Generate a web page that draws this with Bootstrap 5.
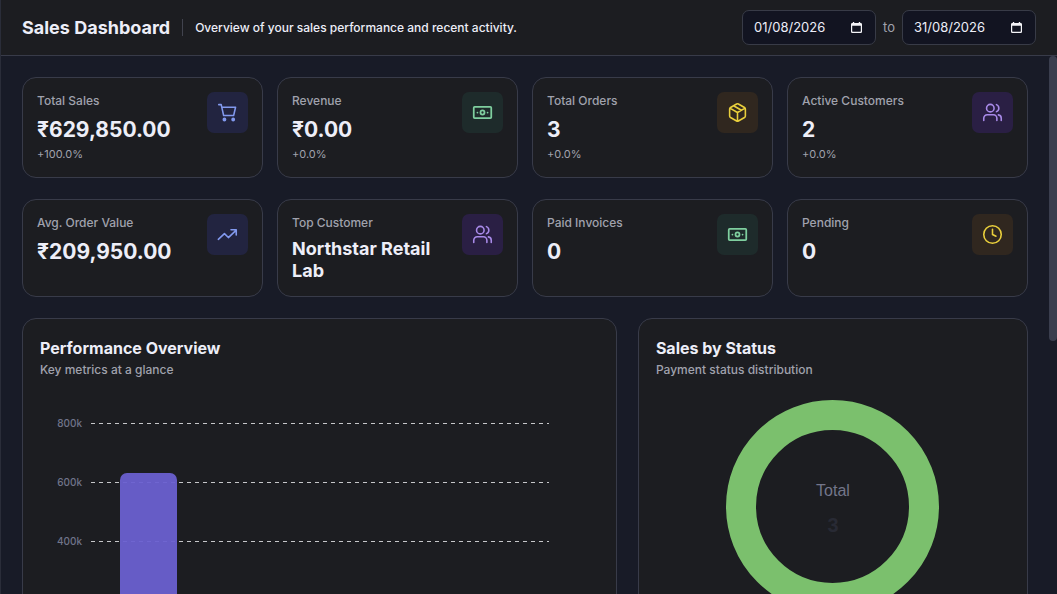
<!DOCTYPE html>
<html lang="en">
<head>
<meta charset="utf-8">
<meta name="viewport" content="width=device-width, initial-scale=1">
<title>Sales Dashboard</title>
<link href="https://cdn.jsdelivr.net/npm/bootstrap@5.3.0/dist/css/bootstrap.min.css" rel="stylesheet">
<style>
  :root { --line: #383b49; --panel: #1c1d21; --page: #181b27; --ink: #edeef8; --soft: #a0a2ad; }
  body { font-family: Inter, "Liberation Sans", sans-serif; background: var(--page); color: var(--ink); font-size: 12px; line-height: 17px; font-weight: 500; }
  .app { border-left: 1px solid #2a2d39; }
  .topbar { background: var(--panel); border-bottom: 1px solid var(--line); padding: 10px 21px; }
  .title-group { gap: 12px; }
  .page-title { font-size: 18px; line-height: 24px; font-weight: 700; }
  .divider { width: 1px; height: 17px; background: #41434e; }
  .soft { color: var(--soft); }
  .dates { gap: 7px; font-size: 13px; font-weight: 400; }
  .date-box { width: 134px; height: 35px; padding: 0 13px 0 11px; background: #121421; border: 1px solid #383b47; border-radius: 7px; }
  .date-box input { min-width: 0; padding: 0; border: 0; outline: 0; background: transparent; color: var(--ink); font-size: 13px; }
  .date-box button { padding: 0; border: 0; background: transparent; color: #f4f4f8; line-height: 0; }
  .scroller { overflow-y: auto; min-width: 0; scrollbar-width: none; }
  .scroller::-webkit-scrollbar { display: none; }
  .rail { width: 8px; }
  .thumb { height: 53%; background: #3a3e4e; border-radius: 4px; }
  .content { padding: 21px; gap: 21px; min-height: 1019px; }
  .stats { display: grid; grid-template-columns: repeat(4, minmax(0, 1fr)); gap: 21px 14px; }
  .tile { background: var(--panel); border: 1px solid var(--line); border-radius: 14px; padding: 14px; }
  .tile.tall { min-height: 101px; }
  .value { font-size: 21px; line-height: 26px; font-weight: 700; margin-top: 8px; }
  .value.name { font-size: 18px; line-height: 22px; margin-top: 7px; }
  .delta { font-size: 11px; line-height: 16px; margin-top: 3px; font-weight: 400; }
  .chip { width: 41px; height: 41px; border-radius: 7px; }
  .chip svg { width: 21px; height: 21px; }
  .blue { background: #222440; color: #8299ee; }
  .green { background: #1e2b2b; color: #7fcf9f; }
  .amber { background: #30271f; color: #e9cf3c; }
  .violet { background: #2a1f44; color: #a88ae8; }
  .panels { display: grid; grid-template-columns: 61fr 40fr; gap: 21px; }
  .panel { background: var(--panel); border: 1px solid var(--line); border-radius: 14px; padding: 18px 17px; }
  .panel h2 { font-size: 16px; line-height: 22px; font-weight: 700; margin: 0 0 2px; }
  .chart { margin: 45px 50px 24px 9px; gap: 9px; }
  .axis { width: 33px; font-size: 10px; color: #70748a; text-align: right; }
  .axis div { height: 59px; line-height: 1px; }
  .plot { height: 236px; }
  .rule { height: 59px; }
  .rule::before { content: ""; display: block; height: 1px; background: repeating-linear-gradient(90deg, #c6c7ca 0 4px, transparent 4px 8px); }
  .bars { display: grid; grid-template-columns: repeat(4, 1fr); align-items: end; justify-items: center; }
  .bar { width: 50%; background: #6a60d0; opacity: .95; border-radius: 7px 7px 0 0; }
  .donut { display: block; width: 213px; height: 213px; margin: 22px auto 0; }
</style>
</head>
<body>
<svg class="d-none" xmlns="http://www.w3.org/2000/svg">
  <symbol id="cart" viewBox="0 0 24 24"><path d="M2 3h2.800l2.800 12.500h11.400l2.200-9.500H5.500" /><circle cx="8.500" cy="20" r="1.300" fill="currentColor"/><circle cx="18.500" cy="20" r="1.300" fill="currentColor"/></symbol>
  <symbol id="cash" viewBox="0 0 24 24"><rect x="2" y="5.500" width="20" height="13" rx="1"/><circle cx="12" cy="12" r="2.300"/><path d="M6.200 12h.01M17.800 12h.01"/></symbol>
  <symbol id="box" viewBox="0 0 24 24"><path d="M21 16V8a2 2 0 0 0-1-1.730l-7-4a2 2 0 0 0-2 0l-7 4A2 2 0 0 0 3 8v8a2 2 0 0 0 1 1.730l7 4a2 2 0 0 0 2 0l7-4A2 2 0 0 0 21 16zM3.300 7l8.700 5 8.700-5M12 22V12M7.500 4.270l9 5.150"/></symbol>
  <symbol id="people" viewBox="0 0 24 24"><circle cx="9.500" cy="7" r="4.300"/><path d="M2 21v-2.500a4 4 0 0 1 4-4h7a4 4 0 0 1 4 4V21M16.500 3a4.300 4.300 0 0 1 0 8M18.700 14.700a4 4 0 0 1 3.300 3.900V21"/></symbol>
  <symbol id="trend" viewBox="0 0 24 24"><path d="M1.500 17.500l7-6.500 4.500 4.500 9-8.500M16 6.500h6v6"/></symbol>
  <symbol id="clock" viewBox="0 0 24 24"><circle cx="12" cy="12" r="10"/><path d="M12 6v6l4 2"/></symbol>
  <symbol id="calendar" viewBox="0 0 12 12"><path fill="currentColor" fill-rule="evenodd" d="M2 0h1.500v1h5V0H10v1h.5A1.500 1.500 0 0 1 12 2.500v8a1.500 1.500 0 0 1-1.500 1.500h-9A1.500 1.500 0 0 1 0 10.500v-8A1.500 1.500 0 0 1 1.500 1H2zM1.300 4v6.200q0 .5.500.5h8.400q.5 0 .5-.5V4z"/></symbol>
</svg>

<div class="app d-flex flex-column vh-100">
  <header class="topbar d-flex align-items-center justify-content-between flex-shrink-0">
    <div class="title-group d-flex align-items-center">
      <h1 class="page-title mb-0">Sales Dashboard</h1>
      <span class="divider"></span>
      <span>Overview of your sales performance and recent activity.</span>
    </div>
    <div class="dates d-flex align-items-center">
      <div class="date-box d-flex align-items-center">
        <input class="flex-grow-1 w-100" type="text" value="01/08/2026" aria-label="From date">
        <button type="button" aria-label="Pick from date"><svg width="11" height="11"><use href="#calendar"/></svg></button>
      </div>
      <span class="soft">to</span>
      <div class="date-box d-flex align-items-center">
        <input class="flex-grow-1 w-100" type="text" value="31/08/2026" aria-label="To date">
        <button type="button" aria-label="Pick to date"><svg width="11" height="11"><use href="#calendar"/></svg></button>
      </div>
    </div>
  </header>

  <div class="d-flex flex-grow-1 overflow-hidden">
  <main class="scroller flex-grow-1">
    <div class="content d-flex flex-column">
      <section class="stats">
        <div class="tile tall d-flex justify-content-between"><div><div class="soft">Total Sales</div><div class="value">₹629,850.00</div><div class="delta soft">+100.0%</div></div><div class="chip blue d-flex align-items-center justify-content-center flex-shrink-0"><svg fill="none" stroke="currentColor" stroke-width="1.800" stroke-linecap="round" stroke-linejoin="round"><use href="#cart"/></svg></div></div>
        <div class="tile tall d-flex justify-content-between"><div><div class="soft">Revenue</div><div class="value">₹0.00</div><div class="delta soft">+0.0%</div></div><div class="chip green d-flex align-items-center justify-content-center flex-shrink-0"><svg fill="none" stroke="currentColor" stroke-width="2" stroke-linecap="round" stroke-linejoin="round"><use href="#cash"/></svg></div></div>
        <div class="tile tall d-flex justify-content-between"><div><div class="soft">Total Orders</div><div class="value">3</div><div class="delta soft">+0.0%</div></div><div class="chip amber d-flex align-items-center justify-content-center flex-shrink-0"><svg fill="none" stroke="currentColor" stroke-width="1.800" stroke-linecap="round" stroke-linejoin="round"><use href="#box"/></svg></div></div>
        <div class="tile tall d-flex justify-content-between"><div><div class="soft">Active Customers</div><div class="value">2</div><div class="delta soft">+0.0%</div></div><div class="chip violet d-flex align-items-center justify-content-center flex-shrink-0"><svg fill="none" stroke="currentColor" stroke-width="1.800" stroke-linecap="round" stroke-linejoin="round"><use href="#people"/></svg></div></div>
        <div class="tile d-flex justify-content-between"><div><div class="soft">Avg. Order Value</div><div class="value">₹209,950.00</div></div><div class="chip blue d-flex align-items-center justify-content-center flex-shrink-0"><svg fill="none" stroke="currentColor" stroke-width="1.800" stroke-linecap="round" stroke-linejoin="round"><use href="#trend"/></svg></div></div>
        <div class="tile d-flex justify-content-between"><div><div class="soft">Top Customer</div><div class="value name">Northstar Retail Lab</div></div><div class="chip violet d-flex align-items-center justify-content-center flex-shrink-0"><svg fill="none" stroke="currentColor" stroke-width="1.800" stroke-linecap="round" stroke-linejoin="round"><use href="#people"/></svg></div></div>
        <div class="tile d-flex justify-content-between"><div><div class="soft">Paid Invoices</div><div class="value">0</div></div><div class="chip green d-flex align-items-center justify-content-center flex-shrink-0"><svg fill="none" stroke="currentColor" stroke-width="2" stroke-linecap="round" stroke-linejoin="round"><use href="#cash"/></svg></div></div>
        <div class="tile d-flex justify-content-between"><div><div class="soft">Pending</div><div class="value">0</div></div><div class="chip amber d-flex align-items-center justify-content-center flex-shrink-0"><svg fill="none" stroke="currentColor" stroke-width="1.800" stroke-linecap="round" stroke-linejoin="round"><use href="#clock"/></svg></div></div>
      </section>

      <section class="panels">
        <article class="panel">
          <h2>Performance Overview</h2>
          <div class="soft">Key metrics at a glance</div>
          <div class="chart d-flex">
            <div class="axis"><div>800k</div><div>600k</div><div>400k</div></div>
            <div class="plot position-relative flex-grow-1">
              <div class="rule"></div><div class="rule"></div><div class="rule"></div><div class="rule"></div>
              <div class="bars position-absolute top-0 start-0 w-100 h-100"><div class="bar" style="height:78.73%"></div></div>
            </div>
          </div>
        </article>
        <article class="panel">
          <h2>Sales by Status</h2>
          <div class="soft">Payment status distribution</div>
          <svg class="donut" viewBox="0 0 213 213" role="img" aria-label="Total 3">
            <circle cx="106.500" cy="106.500" r="91.500" fill="none" stroke="#7bc06d" stroke-width="30"/>
            <g text-anchor="middle" font-family="Liberation Sans, sans-serif">
              <text x="107" y="96" font-size="16" font-weight="400" fill="#73768a">Total</text>
              <text x="107" y="132" font-size="20" font-weight="700" fill="#282a34">3</text>
            </g>
          </svg>
        </article>
      </section>
    </div>
  </main>
  <div class="rail flex-shrink-0" aria-hidden="true"><div class="thumb"></div></div>
  </div>
</div>
<script src="https://cdn.jsdelivr.net/npm/bootstrap@5.3.0/dist/js/bootstrap.bundle.min.js"></script>
</body>
</html>
